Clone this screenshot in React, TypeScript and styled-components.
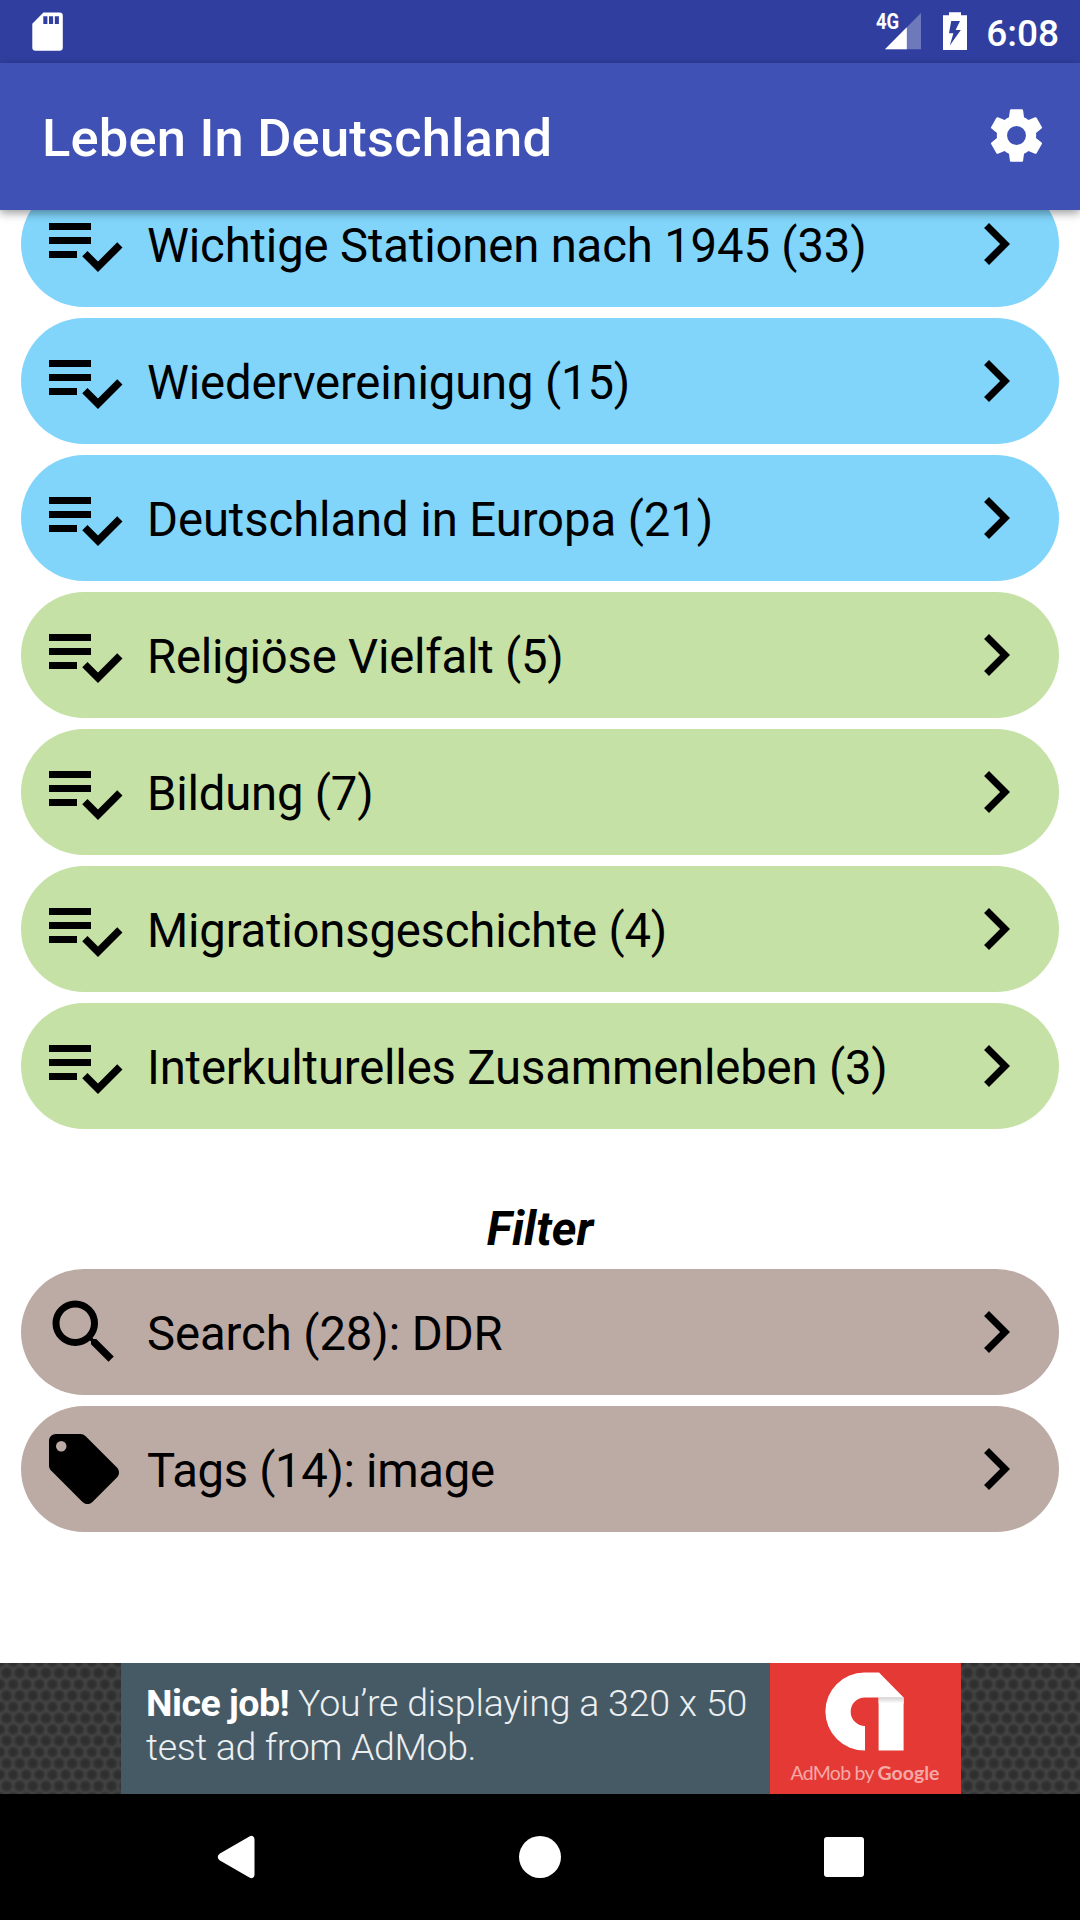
import React from "react";
import styled, { createGlobalStyle } from "styled-components";

const GlobalStyle = createGlobalStyle`
  * { box-sizing: border-box; }
  body { margin: 0; background: #fff; }
  svg { display: block; flex: none; }
`;

const Screen = styled.div`
  width: 1080px;
  height: 1920px;
  display: flex;
  flex-direction: column;
  overflow: hidden;
  background: #fff;
  color: #000;
  font-family: Roboto, "Liberation Sans", sans-serif;
`;

const StatusBar = styled.header`
  flex: none;
  height: 63px;
  display: flex;
  align-items: flex-start;
  justify-content: space-between;
  padding: 0 21px 0 32px;
  background: #303f9f;
  color: #fff;
`;

const StatusGroup = styled.div`
  display: flex;
  height: 63px;
`;

const NetworkLabel = styled.span`
  width: 23px;
  margin-right: -14px;
  padding-top: 10px;
  font-size: 21.5px;
  line-height: 23px;
  font-weight: 700;
  white-space: nowrap;
  transform: scaleX(0.86);
  transform-origin: left center;
`;

const Clock = styled.span`
  margin-left: 19px;
  padding-top: 12px;
  font-size: 37px;
  line-height: 44px;
  font-weight: 500;
`;

const AppBar = styled.div`
  flex: none;
  position: relative;
  z-index: 1;
  height: 147px;
  display: flex;
  align-items: center;
  justify-content: space-between;
  padding: 0 32px 2px 42px;
  background: #3f51b5;
  color: #fff;
  box-shadow: 0 3px 9px rgba(0, 0, 0, 0.4);
`;

const Title = styled.h1`
  margin: 5px 0 0;
  font-size: 52.5px;
  line-height: 62px;
  font-weight: 500;
  letter-spacing: 0.18px;
`;

const Content = styled.main`
  flex: 1;
  min-height: 0;
  overflow: hidden;
  padding: 0 21px;
`;

const List = styled.div<{ $scrolled?: boolean }>`
  display: flex;
  flex-direction: column;
  gap: 11px;
  margin-top: ${(p) => (p.$scrolled ? "-29px" : "0")};
`;

const Pill = styled.button<{ $color: string }>`
  height: 126px;
  flex: none;
  display: flex;
  align-items: center;
  padding: 0 21px;
  border: 0;
  border-radius: 63px;
  background: ${(p) => p.$color};
  color: #000;
  font: inherit;
  text-align: left;
`;

const PillLabel = styled.span<{ $tracking: number }>`
  flex: 1;
  margin-left: 21px;
  padding-top: 4px;
  font-size: 47.25px;
  line-height: 56px;
  letter-spacing: ${(p) => p.$tracking}px;
  white-space: nowrap;
`;

const SectionTitle = styled.h2`
  margin: 72px 0 0;
  height: 68px;
  font-size: 47.25px;
  line-height: 56px;
  font-weight: 700;
  font-style: italic;
  text-align: center;
`;

const AdBar = styled.aside`
  flex: none;
  height: 131px;
  display: flex;
`;

const AdText = styled.p`
  flex: none;
  width: 649px;
  margin: 0;
  padding: 19px 0 0 25px;
  background: #455a64;
  color: #eceff1;
  font-size: 37.5px;
  line-height: 43.5px;
  font-weight: 300;
  letter-spacing: -0.19px;
  white-space: nowrap;
`;

const AdSecondLine = styled.span`
  letter-spacing: -0.38px;
`;

const AdStrong = styled.strong`
  color: #fff;
  font-weight: 700;
  letter-spacing: -0.5px;
`;

const AdBrand = styled.div`
  flex: none;
  width: 191px;
  display: flex;
  flex-direction: column;
  align-items: center;
  padding: 9px 1px 0 0;
  background: #e53935;
`;

const BrandCaption = styled.span`
  margin-top: 9px;
  color: #f5a9a7;
  font-family: Lato, sans-serif;
  font-size: 19.5px;
  line-height: 26px;
  letter-spacing: -0.75px;
  white-space: nowrap;
`;

const BrandName = styled.b`
  font-weight: 700;
  letter-spacing: 0;
`;

const NavBar = styled.nav`
  flex: none;
  height: 126px;
  display: flex;
  align-items: center;
  justify-content: space-between;
  padding: 0 215px;
  background: #000;
`;

const ICONS = {
  list: "M14,10H2V12H14V10M14,6H2V8H14V6M2,16H10V14H2V16M21.5,11.5L23,13L16,20L11.5,15.5L13,14L16,17L21.5,11.5Z",
  chevron: "M8.59,16.58L13.17,12L8.59,7.41L10,6L16,12L10,18L8.59,16.58Z",
  search:
    "M9.5,3A6.5,6.5 0 0,1 16,9.5C16,11.11 15.41,12.59 14.44,13.73L14.71,14H15.5L20.5,19L19,20.5L14,15.5V14.71L13.73,14.44C12.59,15.41 11.11,16 9.5,16A6.5,6.5 0 0,1 3,9.5A6.5,6.5 0 0,1 9.5,3M9.5,5C7,5 5,7 5,9.5C5,12 7,14 9.5,14C12,14 14,12 14,9.5C14,7 12,5 9.5,5Z",
  tag: "M5.5,7A1.5,1.5 0 0,1 4,5.5A1.5,1.5 0 0,1 5.5,4A1.5,1.5 0 0,1 7,5.5A1.5,1.5 0 0,1 5.5,7M21.41,11.58L12.41,2.58C12.05,2.22 11.55,2 11,2H4C2.89,2 2,2.89 2,4V11C2,11.55 2.22,12.05 2.59,12.41L11.58,21.41C11.95,21.77 12.45,22 13,22C13.55,22 14.05,21.77 14.41,21.41L21.41,14.41C21.78,14.05 22,13.55 22,13C22,12.44 21.77,11.94 21.41,11.58Z",
  cog: "M12,15.6A3.6,3.6 0 0,1 8.4,12A3.6,3.6 0 0,1 12,8.4A3.6,3.6 0 0,1 15.6,12A3.6,3.6 0 0,1 12,15.6M19.43,12.97C19.47,12.65 19.5,12.33 19.5,12C19.5,11.67 19.47,11.34 19.43,11L21.54,9.37C21.73,9.22 21.78,8.95 21.66,8.73L19.66,5.27C19.54,5.05 19.27,4.96 19.05,5.05L16.56,6.05C16.04,5.66 15.5,5.32 14.87,5.07L14.5,2.42C14.46,2.18 14.25,2 14,2H10C9.75,2 9.54,2.18 9.5,2.42L9.13,5.07C8.5,5.32 7.96,5.66 7.44,6.05L4.95,5.05C4.73,4.96 4.46,5.05 4.34,5.27L2.34,8.73C2.21,8.95 2.27,9.22 2.46,9.37L4.57,11C4.53,11.34 4.5,11.67 4.5,12C4.5,12.33 4.53,12.65 4.57,12.97L2.46,14.63C2.27,14.78 2.21,15.05 2.34,15.27L4.34,18.73C4.46,18.95 4.73,19.03 4.95,18.95L7.44,17.94C7.96,18.34 8.5,18.68 9.13,18.93L9.5,21.58C9.54,21.82 9.75,22 10,22H14C14.25,22 14.46,21.82 14.5,21.58L14.87,18.93C15.5,18.67 16.04,18.34 16.56,17.94L19.05,18.95C19.27,19.03 19.54,18.95 19.66,18.73L21.66,15.27C21.78,15.05 21.73,14.78 21.54,14.63L19.43,12.97Z",
};

type IconName = keyof typeof ICONS;

const Icon = ({ name, size = 84 }: { name: IconName; size?: number }) => (
  <svg width={size} height={size} viewBox="0 0 24 24" fill="currentColor">
    <path d={ICONS[name]} />
  </svg>
);

const SdCardIcon = () => (
  <svg width="32" height="63" viewBox="0 0 32 63">
    <path
      fill="#fff"
      fillRule="evenodd"
      d="M11.4 12.6H27.5A3.3 3.3 0 0 1 30.8 15.9V47.4A3.3 3.3 0 0 1 27.5 50.7H3.6A3.3 3.3 0 0 1 .3 47.4V23.7ZM11.3 16.2V24H15.4V16.2ZM17 16.2V24H21.1V16.2ZM22.8 16.2V24H26.9V16.2Z"
    />
  </svg>
);

const SignalIcon = () => (
  <svg width="36" height="63" viewBox="0 0 36 63">
    <path d="M36 13V49.3H0Z" fill="#fff" opacity="0.3" />
    <path d="M21.8 27.3V49.3H0Z" fill="#fff" />
  </svg>
);

const BatterySvg = styled.svg`
  margin-left: 22px;
`;

const BatteryIcon = () => (
  <BatterySvg width="24" height="63" viewBox="0 0 24 63">
    <path
      fill="#fff"
      fillRule="evenodd"
      d="M6 12.3H18V15.2H24V50H0V15.2H6ZM8.2 21L6 33.3H10.4L6.8 45.5L17.8 30H12.6L17 21Z"
    />
  </BatterySvg>
);

const AdMobLogo = () => (
  <svg width="80" height="79" viewBox="0 0 80 79">
    <defs>
      <linearGradient id="fold" x1="0" y1="0" x2="0" y2="1">
        <stop offset="0" stopColor="#d2d2d2" />
        <stop offset="1" stopColor="#fff" />
      </linearGradient>
    </defs>
    <path
      fill="#fff"
      d="M39.4 .4H54L78.6 25.4H40A14.3 14.3 0 0 0 25.7 39.7A14.3 14.3 0 0 0 40 54V78.5A39.1 39.1 0 0 1 .4 39.5A39.1 39.1 0 0 1 39.4 .4Z"
    />
    <path fill="#fff" d="M53.6 25.3H78.6V78.5H53.6Z" />
    <path fill="url(#fold)" d="M53.6 25.4H78.6V31.4H53.6Z" />
  </svg>
);

const Mesh = ({ width, id }: { width: number; id: string }) => (
  <svg width={width} height="131">
    <defs>
      <radialGradient id={`${id}-dot`}>
        <stop offset="0" stopColor="#2d2d2d" />
        <stop offset="0.55" stopColor="#313131" />
        <stop offset="1" stopColor="#434343" />
      </radialGradient>
      <pattern id={id} width="13.12" height="22.6" patternUnits="userSpaceOnUse">
        <rect width="14" height="23" fill="#434343" />
        <circle cx="6.56" cy="10" r="6.8" fill={`url(#${id}-dot)`} />
        <circle cx="0" cy="21.3" r="6.5" fill={`url(#${id}-dot)`} />
        <circle cx="13.12" cy="21.3" r="6.5" fill={`url(#${id}-dot)`} />
        <circle cx="0" cy="-1.3" r="6.5" fill={`url(#${id}-dot)`} />
        <circle cx="13.12" cy="-1.3" r="6.5" fill={`url(#${id}-dot)`} />
      </pattern>
    </defs>
    <rect width={width} height="131" fill={`url(#${id})`} />
  </svg>
);

const BLUE = "#81d4fa";
const GREEN = "#c5e1a5";
const BROWN = "#bcaaa4";

type Entry = { label: string; icon: IconName; color: string; tracking: number };

const topics: Entry[] = [
  { label: "Wichtige Stationen nach 1945 (33)", icon: "list", color: BLUE, tracking: -0.15 },
  { label: "Wiedervereinigung (15)", icon: "list", color: BLUE, tracking: -0.16 },
  { label: "Deutschland in Europa (21)", icon: "list", color: BLUE, tracking: -0.09 },
  { label: "Religiöse Vielfalt (5)", icon: "list", color: GREEN, tracking: -0.22 },
  { label: "Bildung (7)", icon: "list", color: GREEN, tracking: -0.2 },
  { label: "Migrationsgeschichte (4)", icon: "list", color: GREEN, tracking: -0.2 },
  { label: "Interkulturelles Zusammenleben (3)", icon: "list", color: GREEN, tracking: -0.17 },
];

const filters: Entry[] = [
  { label: "Search (28): DDR", icon: "search", color: BROWN, tracking: -0.08 },
  { label: "Tags (14): image", icon: "tag", color: BROWN, tracking: -0.34 },
];

const Row = ({ label, icon, color, tracking }: Entry) => (
  <Pill $color={color}>
    <Icon name={icon} />
    <PillLabel $tracking={tracking}>{label}</PillLabel>
    <Icon name="chevron" />
  </Pill>
);

export default function App() {
  return (
    <>
      <GlobalStyle />
      <Screen>
        <StatusBar>
          <SdCardIcon />
          <StatusGroup>
            <NetworkLabel>4G</NetworkLabel>
            <SignalIcon />
            <BatteryIcon />
            <Clock>6:08</Clock>
          </StatusGroup>
        </StatusBar>
        <AppBar>
          <Title>Leben In Deutschland</Title>
          <Icon name="cog" size={63} />
        </AppBar>
        <Content>
          <List $scrolled>
            {topics.map((t) => (
              <Row key={t.label} {...t} />
            ))}
          </List>
          <SectionTitle>Filter</SectionTitle>
          <List>
            {filters.map((f) => (
              <Row key={f.label} {...f} />
            ))}
          </List>
        </Content>
        <AdBar>
          <Mesh width={121} id="mesh-left" />
          <AdText>
            <AdStrong>Nice job!</AdStrong> You’re displaying a 320 x 50
            <br />
            <AdSecondLine>test ad from AdMob.</AdSecondLine>
          </AdText>
          <AdBrand>
            <AdMobLogo />
            <BrandCaption>
              AdMob by <BrandName>Google</BrandName>
            </BrandCaption>
          </AdBrand>
          <Mesh width={119} id="mesh-right" />
        </AdBar>
        <NavBar>
          <svg width="42" height="46" viewBox="0 0 42 46">
            <path
              d="M5.5 21.6L35.4 4.2Q37.5 3 37.5 5.4V40.6Q37.5 43 35.4 41.8L5.5 24.4Q4 23 5.5 21.6Z"
              fill="#fff"
              stroke="#fff"
              strokeWidth="4"
              strokeLinejoin="round"
            />
          </svg>
          <svg width="42" height="42" viewBox="0 0 42 42">
            <circle cx="21" cy="21" r="21" fill="#fff" />
          </svg>
          <svg width="42" height="42" viewBox="0 0 42 42">
            <rect x="1" y="1" width="40" height="40" rx="3" fill="#fff" />
          </svg>
        </NavBar>
      </Screen>
    </>
  );
}
